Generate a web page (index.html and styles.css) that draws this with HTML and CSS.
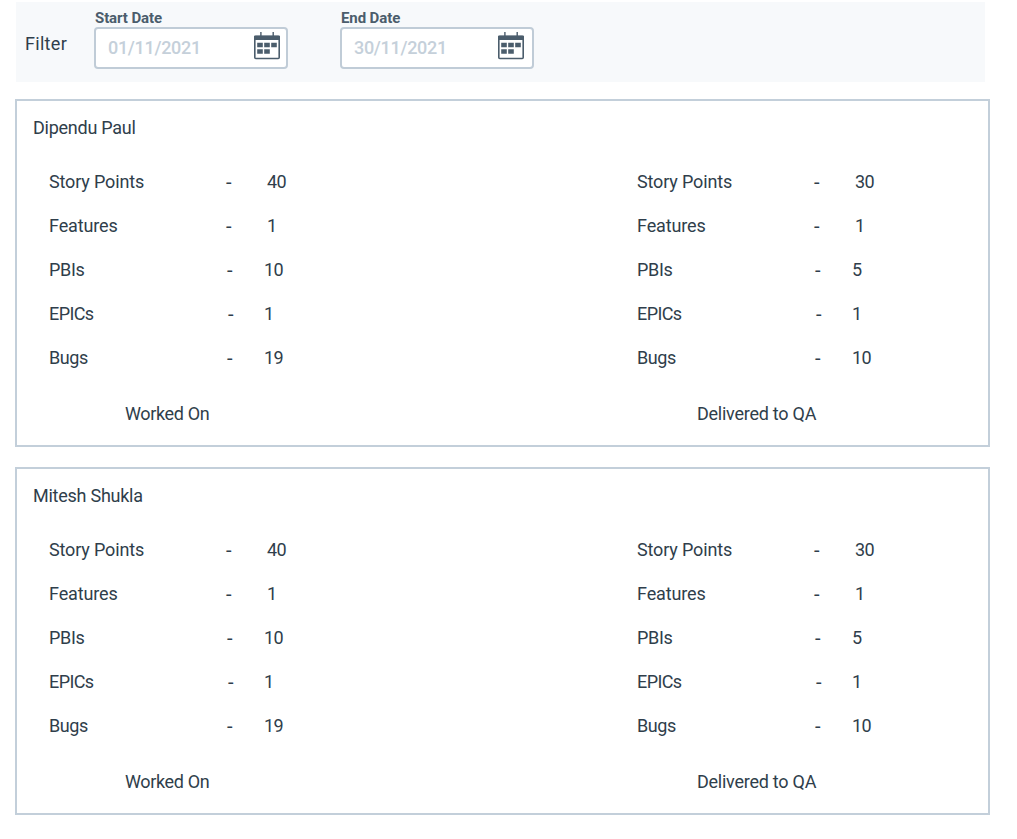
FILE: index.html
```html
<!DOCTYPE html>
<html lang="en">
<head>
<meta charset="utf-8">
<title>Team report</title>
<link rel="stylesheet" href="styles.css">
</head>
<body>
<form class="filter">
  <span class="filter-title">Filter</span>
  <div class="field">
    <span class="field-label">Start Date</span>
    <div class="field-box"><span class="date">01/11/2021</span>
      <svg class="calendar" viewBox="0 0 26 28"><rect x=".8" y="4.5" width="24.4" height="22" rx="1" fill="#fff" stroke="#4b5d6c" stroke-width="1.6"/><path d="M0 4.5Q0 3.5 1 3.5h24q1 0 1 1V8H0zM6.2 0h1.4v4H6.200zM18.500 0h1.400v4h-1.400zM3.200 10.700h5.600v4.600H3.200zM10.200 10.700h5.600v4.600h-5.600zM17.200 10.700h5.600v4.600h-5.600zM3.200 17.200h5.600v4.600H3.200zM10.200 17.200h5.600v4.600h-5.600z" fill="#4b5d6c"/></svg>
    </div>
  </div>
  <div class="field field-end">
    <span class="field-label">End Date</span>
    <div class="field-box"><span class="date">30/11/2021</span>
      <svg class="calendar" viewBox="0 0 26 28"><rect x=".8" y="4.5" width="24.4" height="22" rx="1" fill="#fff" stroke="#4b5d6c" stroke-width="1.6"/><path d="M0 4.5Q0 3.5 1 3.5h24q1 0 1 1V8H0zM6.2 0h1.4v4H6.200zM18.500 0h1.400v4h-1.400zM3.200 10.700h5.600v4.600H3.200zM10.200 10.700h5.600v4.600h-5.600zM17.200 10.700h5.600v4.600h-5.600zM3.200 17.200h5.600v4.600H3.200zM10.200 17.200h5.600v4.600h-5.600z" fill="#4b5d6c"/></svg>
    </div>
  </div>
</form>
<section class="card">
  <h2 class="name">Dipendu Paul</h2>
  <div class="columns">
    <div class="stats">
      <div class="row wide"><span class="story">Story Points</span><span class="dash">-</span><span class="value">40</span></div>
      <div class="row wide"><span class="features">Features</span><span class="dash">-</span><span class="value">1</span></div>
      <div class="row"><span class="pbis">PBIs</span><span class="dash">-</span><span class="value">10</span></div>
      <div class="row epic"><span class="epics">EPICs</span><span class="dash">-</span><span class="value">1</span></div>
      <div class="row"><span class="bugs">Bugs</span><span class="dash">-</span><span class="value">19</span></div>
      <div class="caption worked">Worked On</div>
    </div>
    <div class="stats">
      <div class="row wide"><span class="story">Story Points</span><span class="dash">-</span><span class="value">30</span></div>
      <div class="row wide"><span class="features">Features</span><span class="dash">-</span><span class="value">1</span></div>
      <div class="row"><span class="pbis">PBIs</span><span class="dash">-</span><span class="value">5</span></div>
      <div class="row epic"><span class="epics">EPICs</span><span class="dash">-</span><span class="value">1</span></div>
      <div class="row"><span class="bugs">Bugs</span><span class="dash">-</span><span class="value">10</span></div>
      <div class="caption delivered">Delivered to QA</div>
    </div>
  </div>
</section>
<section class="card">
  <h2 class="name">Mitesh Shukla</h2>
  <div class="columns">
    <div class="stats">
      <div class="row wide"><span class="story">Story Points</span><span class="dash">-</span><span class="value">40</span></div>
      <div class="row wide"><span class="features">Features</span><span class="dash">-</span><span class="value">1</span></div>
      <div class="row"><span class="pbis">PBIs</span><span class="dash">-</span><span class="value">10</span></div>
      <div class="row epic"><span class="epics">EPICs</span><span class="dash">-</span><span class="value">1</span></div>
      <div class="row"><span class="bugs">Bugs</span><span class="dash">-</span><span class="value">19</span></div>
      <div class="caption worked">Worked On</div>
    </div>
    <div class="stats">
      <div class="row wide"><span class="story">Story Points</span><span class="dash">-</span><span class="value">30</span></div>
      <div class="row wide"><span class="features">Features</span><span class="dash">-</span><span class="value">1</span></div>
      <div class="row"><span class="pbis">PBIs</span><span class="dash">-</span><span class="value">5</span></div>
      <div class="row epic"><span class="epics">EPICs</span><span class="dash">-</span><span class="value">1</span></div>
      <div class="row"><span class="bugs">Bugs</span><span class="dash">-</span><span class="value">10</span></div>
      <div class="caption delivered">Delivered to QA</div>
    </div>
  </div>
</section>
</body>
</html>
```
FILE: styles.css
```css
* { box-sizing: border-box; }
body {
  margin: 0;
  padding: 2px 27px 0 15px;
  background: #fff;
  color: #2f3e4b;
  font: 18px/20px Roboto, sans-serif;
}
.filter {
  display: flex;
  height: 80px;
  margin: 0 5px 17px 1px;
  padding: 8px 0 0 9px;
  background: #f7f9fb;
}
.filter-title { width: 69px; padding-top: 24px; letter-spacing: 0.3px; }
.field { width: 194px; }
.field-end { margin-left: 52px; }
.field-label {
  display: block;
  height: 17px;
  padding-left: 1px;
  color: #4b5d6c;
  font-size: 15px;
  font-weight: 700;
  line-height: 16px;
  letter-spacing: -0.1px;
}
.field-box {
  display: flex;
  justify-content: space-between;
  height: 42px;
  padding: 3px 6px 0 12px;
  border: 2px solid #c0ccd7;
  border-radius: 4px;
  background: #fff;
}
.field-end .field-box { padding-right: 8px; }
.date { padding-top: 6px; color: #c5d0da; font-weight: 500; letter-spacing: -0.3px; }
.calendar { width: 26px; height: 28px; }
.card {
  height: 348px;
  margin-bottom: 20px;
  padding: 17px 16px 0;
  border: 2px solid #c3cfda;
}
.name { margin: 0 0 22px; font-size: 18px; font-weight: 400; line-height: 20px; letter-spacing: -0.25px; }
.columns { display: grid; grid-template-columns: 588px 1fr; padding-left: 16px; }
.row {
  display: grid;
  grid-template-columns: 177px 38px auto;
  line-height: 44px;
}
.row.wide { grid-template-columns: 176px 42px auto; }
.row.epic { grid-template-columns: 178px 37px auto; }
.story { letter-spacing: -0.15px; }
.features { letter-spacing: -0.12px; }
.pbis { letter-spacing: -0.3px; }
.epics { letter-spacing: -0.6px; }
.bugs { letter-spacing: -0.4px; }
.dash { padding-left: 1px; font-size: 20px; }
.value { letter-spacing: -0.5px; }
.caption { padding-top: 24px; line-height: 20px; }
.worked { padding-left: 76px; letter-spacing: -0.35px; }
.delivered { padding-left: 60px; letter-spacing: -0.25px; }
```
